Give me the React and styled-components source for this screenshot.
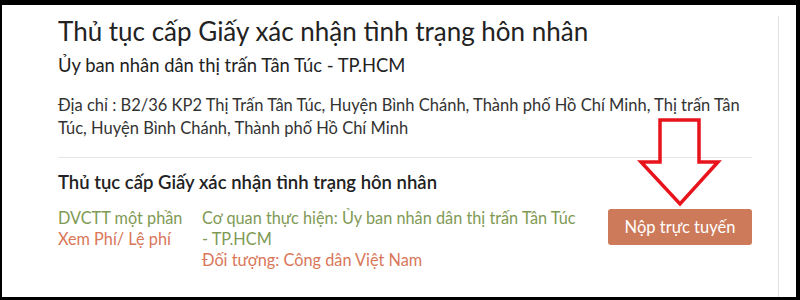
import React from "react";
import styled, { createGlobalStyle } from "styled-components";

const Global = createGlobalStyle`
  html, body { margin: 0; padding: 0; background: #000; }
  body { font-family: "Lato", "Noto Sans", sans-serif; }
  * { box-sizing: border-box; }
`;

const Frame = styled.div`
  width: 800px;
  height: 300px;
  padding: 5px 4px 3px 2px;
  background: #000;
`;

const Screen = styled.div`
  position: relative;
  width: 100%;
  height: 100%;
  background: #fff;
  padding-top: 11px;
  overflow: hidden;
`;

const Card = styled.div`
  width: 777px;
  height: 100%;
  border-right: 1px solid #e2e2e2;
  padding: 0 26px 0 56px;
`;

const Title = styled.h1`
  margin: 0;
  font-size: 26px;
  font-weight: 400;
  line-height: 30px;
  color: #222;
`;

const Agency = styled.div`
  margin-top: 8px;
  font-size: 18.4px;
  line-height: 22px;
  color: #222;
`;

const Address = styled.div`
  margin-top: 18px;
  font-size: 16.5px;
  line-height: 23px;
  color: #333;
`;

const Divider = styled.hr`
  margin: 17px 0 0;
  border: 0;
  border-top: 1px solid #e6e6e6;
`;

const Section = styled.div`
  padding-top: 12px;
`;

const SectionTitle = styled.h2`
  margin: 0;
  font-size: 18.5px;
  font-weight: 600;
  line-height: 24px;
  color: #222;
`;

const Row = styled.div`
  display: flex;
  align-items: flex-start;
  margin-top: 13px;
`;

const Col = styled.div`
  width: ${(p) => p.$w}px;
  flex: none;
  font-size: 16.3px;
  line-height: 21px;
`;

const Line = styled.div`
  color: ${(p) => (p.$tone === "green" ? "#7f9a55" : "#d9775a")};
`;

const Actions = styled.div`
  flex: 1;
  display: flex;
  justify-content: flex-end;
  padding-top: 2px;
`;

const Button = styled.button`
  width: 144px;
  height: 36px;
  border: 0;
  border-radius: 3px;
  background: #cd7a5a;
  color: #fff;
  font-family: inherit;
  font-size: 16.5px;
  cursor: pointer;
`;

const Arrow = styled.svg`
  position: absolute;
  left: 0;
  top: 0;
  pointer-events: none;
`;

export default function App() {
  return (
    <>
      <Global />
      <Frame>
        <Screen>
          <Card>
            <Title>Thủ tục cấp Giấy xác nhận tình trạng hôn nhân</Title>
            <Agency>Ủy ban nhân dân thị trấn Tân Túc - TP.HCM</Agency>
            <Address>
              Địa chỉ : B2/36 KP2 Thị Trấn Tân Túc, Huyện Bình Chánh, Thành phố Hồ Chí Minh, Thị trấn Tân Túc, Huyện Bình Chánh, Thành phố Hồ Chí Minh
            </Address>
            <Divider />
            <Section>
              <SectionTitle>Thủ tục cấp Giấy xác nhận tình trạng hôn nhân</SectionTitle>
              <Row>
                <Col $w={144}>
                  <Line $tone="green">DVCTT một phần</Line>
                  <Line $tone="orange">Xem Phí/ Lệ phí</Line>
                </Col>
                <Col $w={380}>
                  <Line $tone="green">Cơ quan thực hiện: Ủy ban nhân dân thị trấn Tân Túc - TP.HCM</Line>
                  <Line $tone="orange">Đối tượng: Công dân Việt Nam</Line>
                </Col>
                <Actions>
                  <Button>Nộp trực tuyến</Button>
                </Actions>
              </Row>
            </Section>
          </Card>
          <Arrow width="794" height="292" viewBox="2 5 794 292">
            <polygon
              points="660,120 699,120 699,162 718,162 680,204 641,162 660,162"
              fill="none"
              stroke="#e8141c"
              strokeWidth="3.5"
              strokeLinejoin="miter"
            />
          </Arrow>
        </Screen>
      </Frame>
    </>
  );
}
